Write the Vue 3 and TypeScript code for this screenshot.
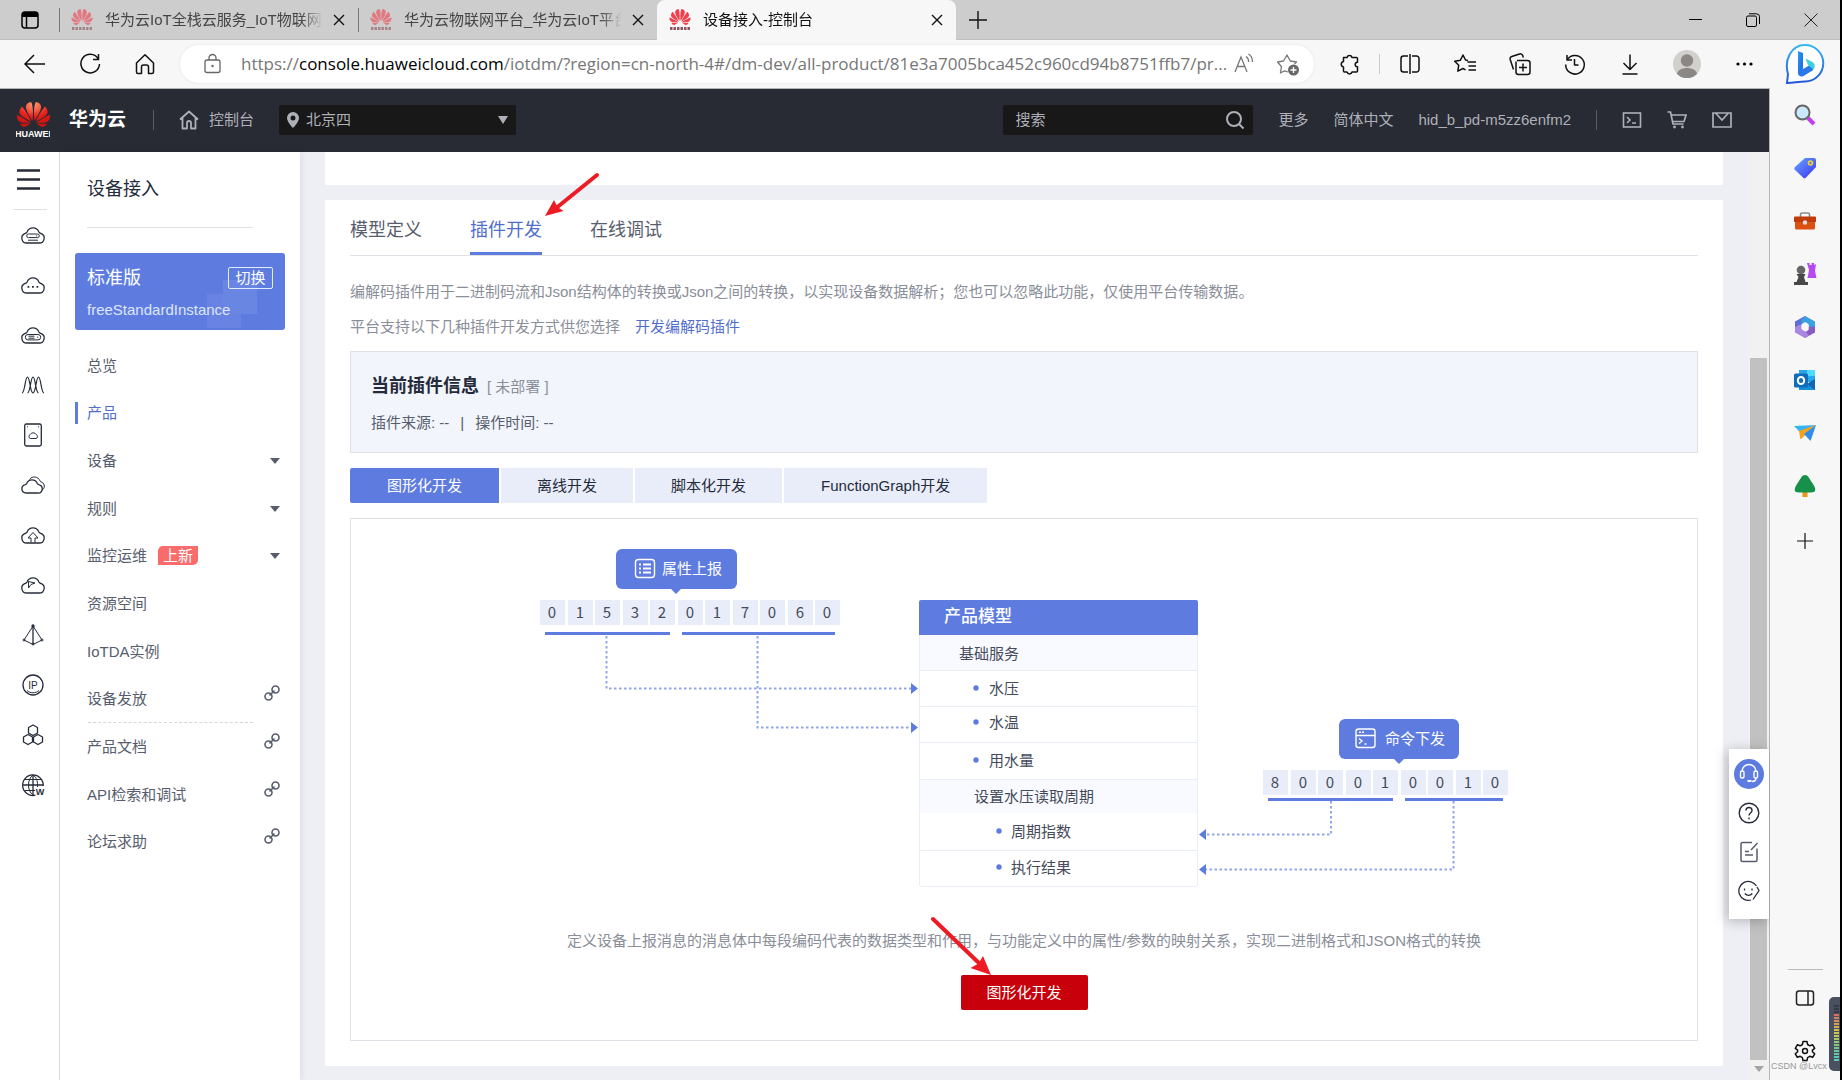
<script setup lang="ts">
import { ref } from 'vue'

interface Shape {
  d: string
  fill?: string
  stroke?: string
  width?: number
}
interface Glyph {
  name: string
  shapes: Shape[]
}
interface MenuItem {
  label: string
  kind?: 'expand' | 'link'
  badge?: string
  dashed?: boolean
}

const petals =
  'M3.67 6.14S1.82 7.91 1.72 9.78v.35c.08 1.51 1.22 2.4 1.22 2.4 1.83 1.79 6.26 4.04 7.3 4.55 0 0 .06.03.1-.01l.02-.04v-.04C7.52 10.8 3.67 6.14 3.67 6.14zM9.65 18.6c-.02-.08-.1-.08-.1-.08l-7.38.26c.8 1.43 2.15 2.53 3.56 2.2.96-.25 3.16-1.78 3.88-2.3.06-.05.04-.09.04-.09zm.08-.78C6.49 15.63.21 12.28.21 12.28c-.15.46-.2.9-.21 1.3v.07c0 1.07.4 1.82.4 1.82.8 1.69 2.34 2.2 2.34 2.2.7.3 1.4.31 1.4.31.12.02 4.4 0 5.54 0 .05 0 .08-.05.08-.05v-.06c0-.03-.03-.05-.03-.05zM9.06 3.19a3.42 3.42 0 00-2.57 3.15v.41c.03.6.16 1.05.16 1.05.66 2.9 3.86 7.65 4.55 8.65.05.05.1.03.1.03a.1.1 0 00.06-.1c1.06-10.6-1.11-13.42-1.11-13.42-.32.02-1.19.23-1.19.23zm8.299 2.27s-.49-1.8-2.44-2.28c0 0-.57-.14-1.17-.22 0 0-2.18 2.81-1.12 13.43.01.07.06.08.06.08.07.03.1-.03.1-.03.72-1.03 3.9-5.76 4.55-8.64 0 0 .36-1.4.02-2.34zm-2.92 13.07s-.07 0-.09.05c0 0-.01.07.03.1.7.51 2.85 2 3.88 2.3 0 0 .16.05.43.06h.14c.69-.02 1.9-.37 3-2.26l-7.4-.25zm7.83-8.41c.14-2.06-1.94-3.97-1.94-3.98 0 0-3.85 4.66-6.67 10.8 0 0-.03.08.02.13l.04.01h.06c1.06-.53 5.46-2.77 7.28-4.54 0 0 1.15-.93 1.21-2.42zm1.52 2.14s-6.28 3.37-9.52 5.55c0 0-.05.04-.03.11 0 0 .03.06.07.06 1.16 0 5.56 0 5.67-.02 0 0 .57-.02 1.27-.29 0 0 1.56-.5 2.37-2.27 0 0 .73-1.45.17-3.14z'

const browserTabs = [
  { title: '华为云IoT全栈云服务_IoT物联网解', active: false },
  { title: '华为云物联网平台_华为云IoT平台', active: false },
  { title: '设备接入-控制台', active: true },
]

const browserTools: Glyph[] = [
  { name: '拆分窗口', shapes: [{ d: 'M10 4H5.500a2.500 2.500 0 00-2.500 2.500v11A2.500 2.500 0 005.500 20H10M14 4h4.500A2.500 2.500 0 0121 6.500v11a2.500 2.500 0 01-2.500 2.500H14M12 2v20' }] },
  { name: '收藏夹', shapes: [{ d: 'M15 8.500L12.500 8 10 3 7.300 8.300 1.700 9.200 5.700 13.300 4.800 19.200 10 16.500 12.500 17.800M14.500 10H23M15.500 14H23M15.500 18H23' }] },
  { name: '集锦', shapes: [{ d: 'M9 8.500h10.500A2.500 2.500 0 0122 11v9a2.500 2.500 0 01-2.500 2.500h-9A2.500 2.500 0 018 20V9.500M15 11.500v8M11 15.500h8M5.500 17.500L2.200 7.500a2.500 2.500 0 011.600-3L11.500 2a2.500 2.500 0 013.200 1.600l.6 2' }] },
  { name: '历史记录', shapes: [{ d: 'M4 3v5h5M4.200 7.700A9.300 9.300 0 112.700 12.500M11.500 7v6h4' }] },
  { name: '下载', shapes: [{ d: 'M12 2.500V17M5.500 11l6.500 6.500 6.500-6.500M4.500 22h15' }] },
]

const cloud = 'M8 22h12a4.900 4.900 0 002.400-9.300c-1-.5-2-.6-2.500-1.700a6.300 6.300 0 00-11.800 0c-.5 1.100-1.500 1.200-2.500 1.700A4.900 4.900 0 008 22z'

const services: Glyph[] = [
  { name: '云服务器', shapes: [{ d: cloud }, { d: 'M9.500 13h9a1.700 1.700 0 010 3.600h-9a1.700 1.700 0 010-3.600zM17.200 14.800h1M9 19.200h10', width: 1 }] },
  { name: '裸金属', shapes: [{ d: cloud }, { d: 'M8.500 15h1.800v1.800H8.500zM13 15h1.800v1.800H13zM17.500 15h1.800v1.800h-1.800z', fill: '#252b3a', stroke: 'none' }] },
  { name: '云主机', shapes: [{ d: cloud }, { d: 'M9 13.500h10a2.700 2.700 0 010 5.400H9a2.700 2.700 0 010-5.400zM9.500 15.200h6M9.500 17.200h6M18 16.200h1.200', width: 1 }] },
  { name: '弹性伸缩', shapes: [{ d: 'M3 22c3 0 3-16 5.500-16S11 22 14 22M8.500 22C11.500 22 11.500 6 14 6s2.500 16 5.500 16M14 22c3 0 3-16 5.500-16S22 22 25 22', width: 1.2 }] },
  { name: '镜像', shapes: [{ d: 'M7.500 3h13a1.800 1.800 0 011.800 1.800v18.400a1.800 1.800 0 01-1.800 1.800h-13a1.800 1.800 0 01-1.800-1.800V4.800A1.800 1.800 0 017.500 3z' }, { d: 'M11.500 17.500h5.500a2 2 0 00.3-3.800 3.500 3.500 0 00-6.200 0 2 2 0 00.4 3.800zM8 5.800h1M19 5.800h1', width: 1 }] },
  { name: '对象存储', shapes: [{ d: 'M7 22h11.500a4.200 4.200 0 001.700-8.200c-.8-.3-1.500-.5-1.900-1.400a5.700 5.700 0 00-10.600 0c-.4.900-1.100 1.100-1.900 1.400A4.200 4.200 0 007 22z' }, { d: 'M10.500 8.500c2.500-4 9-3 10.500 1.300.4 1 1 1.200 1.900 1.500 3.200 1.500 3.200 6 .1 7.900', width: 1 }] },
  { name: '云上传', shapes: [{ d: cloud }, { d: 'M12 21.500V17H9l5-5.500 5 5.500h-3v4.500', width: 1 }] },
  { name: '云加速', shapes: [{ d: cloud }, { d: 'M9.500 10.500v6.500l2.500-3.500 4-1.500-6.500-1.500', width: 1 }] },
  { name: '虚拟私有云', shapes: [{ d: 'M14 5L5 19l9 4.500L23 19 14 5z', width: 1 }, { d: 'M14 4v19' }, { d: 'M14 4a1 1 0 110 2 1 1 0 010-2z', fill: '#252b3a' }, { d: 'M14 22a1 1 0 110 2 1 1 0 010-2zM5 18a1 1 0 110 2 1 1 0 010-2zM23 18a1 1 0 110 2 1 1 0 010-2z', width: 1 }] },
  { name: '弹性公网', shapes: [{ d: 'M14 4a10 10 0 110 20 10 10 0 010-20z' }, { d: 'M8 19.500c3 3 9 3 12 0', width: 1 }] },
  { name: '关系型数据库', shapes: [{ d: 'M14 4l4.500 2.500V12L14 14.500 9.500 12V6.500L14 4zM9 13.500l4.500 2.500v5L9 23.500 4.500 21v-5L9 13.500zM19 13.500l4.500 2.500v5L19 23.500 14.500 21v-5l4.500-2.500z' }] },
  { name: '域名', shapes: [{ d: 'M16.500 24.200A10.300 10.300 0 1124.200 15M14 4v20M4 14h20' }, { d: 'M14 4c-6 4-6 16 0 20M14 4c4 2.500 5 8 4.500 12M6 8.500h16M6 19.500h10', width: 1 }] },
]

const menu: MenuItem[] = [
  { label: '总览' },
  { label: '产品' },
  { label: '设备', kind: 'expand' },
  { label: '规则', kind: 'expand' },
  { label: '监控运维', kind: 'expand', badge: '上新' },
  { label: '资源空间' },
  { label: 'IoTDA实例' },
  { label: '设备发放', kind: 'link', dashed: true },
  { label: '产品文档', kind: 'link' },
  { label: 'API检索和调试', kind: 'link' },
  { label: '论坛求助', kind: 'link' },
]
const currentMenu = ref('产品')

const tabs = ['模型定义', '插件开发', '在线调试']
const currentTab = ref('插件开发')

const modes = ['图形化开发', '离线开发', '脚本化开发', 'FunctionGraph开发']
const currentMode = ref('图形化开发')

const region = ref('北京四')
const keyword = ref('')

const reportDigits = '01532017060'.split('')
const commandDigits = '800010010'.split('')
const digitX = (start: number, i: number): number => start + Math.round(i * 27.5)

const modelRows = [
  { label: '基础服务', x: 419, y: 104, dot: 0 },
  { label: '水压', x: 449, y: 139, dot: 436 },
  { label: '水温', x: 449, y: 173, dot: 436 },
  { label: '用水量', x: 449, y: 211, dot: 436 },
  { label: '设置水压读取周期', x: 434, y: 247, dot: 0 },
  { label: '周期指数', x: 471, y: 282, dot: 459 },
  { label: '执行结果', x: 471, y: 318, dot: 459 },
]
const modelLines = [121, 157, 193, 230, 301]

const meter = ['#343a48', '#343a48', '#343a48', '#d9705a', '#d9805a', '#d98f55', '#d9a04f', '#d8b04a', '#d3bd49', '#cbc552', '#bcc75c', '#aac766', '#98c870', '#86c87a', '#74c888', '#68c998', '#5fcaa6', '#5bcbb0', '#59ccb6']
</script>

<template>
  <div class="window">
    <header class="tabbar">
      <button class="workspace" aria-label="标签页操作">
        <svg width="20" height="20" viewBox="0 0 20 20"><rect x="2" y="2" width="16" height="16" rx="3" fill="none" stroke="#000" stroke-width="1.500" /><path d="M2 7V5a3 3 0 013-3h10a3 3 0 013 3v2z" /><path d="M6.500 7v11" stroke="#000" stroke-width="1.500" /></svg>
      </button>
      <div v-for="t in browserTabs" :key="t.title" class="btab" :class="{ active: t.active }">
        <svg class="favicon" width="22" height="22" viewBox="0 0 22 22">
          <svg x="0" y="0" width="22" height="16" viewBox="0 2.900 24 18.200"><path :d="petals" fill="#f0404e" /></svg>
          <path d="M1 19.500h20" stroke="#8a5560" stroke-width="3" stroke-dasharray="2.500 1" />
        </svg>
        <span class="btitle">{{ t.title }}</span>
        <button class="bclose" aria-label="关闭标签页"><svg width="12" height="12" viewBox="0 0 12 12"><path d="M1 1l10 10M11 1L1 11" stroke="#111" stroke-width="1.400" /></svg></button>
      </div>
      <button class="newtab" aria-label="新建标签页"><svg width="18" height="18" viewBox="0 0 18 18"><path d="M9 0v18M0 9h18" stroke="#111" stroke-width="1.400" /></svg></button>
      <div class="winctl">
        <button aria-label="最小化"><svg width="14" height="14" viewBox="0 0 14 14"><path d="M1 6.500h13" stroke="#000" /></svg></button>
        <button aria-label="还原"><svg width="14" height="14" viewBox="0 0 14 14"><g fill="none" stroke="#000"><rect x=".5" y="3" width="10" height="10.500" rx="1.500" /><path d="M3 .8h7.500a3 3 0 013 3V11" /></g></svg></button>
        <button aria-label="关闭"><svg width="14" height="14" viewBox="0 0 14 14"><path d="M.5 .5l13 13M13.500 .5l-13 13" stroke="#222" /></svg></button>
      </div>
    </header>

    <div class="below">
      <div class="main">
        <nav class="toolbar">
          <button class="nav" aria-label="后退"><svg width="24" height="24" viewBox="0 0 24 24"><path d="M22 12H2.500M11 3l-9 9 9 9" fill="none" stroke="#111" stroke-width="1.500" /></svg></button>
          <button class="nav" aria-label="刷新"><svg width="24" height="24" viewBox="0 0 24 24"><path d="M20 6.500A9.300 9.300 0 1021.500 12M20.500 2v5.500H15" fill="none" stroke="#111" stroke-width="1.500" /></svg></button>
          <button class="nav" aria-label="主页"><svg width="24" height="24" viewBox="0 0 24 24"><path d="M3.500 11L12 2.800l8.500 8.200v9a1.500 1.500 0 01-1.500 1.500h-3.500V15a2 2 0 00-2-2h-3a2 2 0 00-2 2v6.500H5A1.500 1.500 0 013.500 20z" fill="none" stroke="#111" stroke-width="1.500" stroke-linejoin="round" /></svg></button>
          <div class="address">
            <svg class="lock" width="20" height="22" viewBox="0 0 20 22"><g fill="none" stroke="#666" stroke-width="1.300"><rect x="3" y="7" width="15" height="12.500" rx="2" /><path d="M7 7V5a3.500 3.500 0 017 0v2" /></g><circle cx="10.500" cy="13" r="1.200" fill="#666" /></svg>
            <div class="url" role="textbox" aria-label="地址">https://<b>console.huaweicloud.com</b>/iotdm/?region=cn-north-4#/dm-dev/all-product/81e3a7005bca452c960cd94b8751ffb7/pr...</div>
            <button aria-label="大声朗读"><svg width="22" height="22" viewBox="0 0 22 22"><path d="M2 19L8 4l6 15M4.200 13.500h7.600M13 3.500c2 1.200 2.700 3 2.700 5.500M15.500 1c3 1.800 4 4.500 4 8" fill="none" stroke="#777" stroke-width="1.300" /></svg></button>
            <button class="favadd" aria-label="添加到收藏夹"><svg width="24" height="24" viewBox="0 0 24 24"><path d="M12 20l-3.500-1.200L4.500 21l.9-6.500L1.500 10l6-1L11 3l3.300 6 6.200 1-2 2" fill="none" stroke="#777" stroke-width="1.300" stroke-linejoin="round" /><circle cx="17.500" cy="18" r="5.500" fill="#666" /><path d="M17.500 15v6M14.500 18h6" stroke="#fff" stroke-width="1.300" /></svg></button>
          </div>
          <button class="tool ext" aria-label="扩展"><svg width="24" height="24" viewBox="0 0 24 24"><path d="M5.500 5.500H9a2.600 2.600 0 015 0h4.500a1 1 0 011 1v3.700a2.300 2.300 0 100 4.600V19a1 1 0 01-1 1H14a2.600 2.600 0 01-5 0H6.500a1 1 0 01-1-1v-4a2.800 2.800 0 010-5.500z" fill="none" stroke="#111" stroke-width="1.500" stroke-linejoin="round" /></svg></button>
          <i class="tsep"></i>
          <button v-for="g in browserTools" :key="g.name" class="tool" :aria-label="g.name">
            <svg width="24" height="24" viewBox="0 0 24 24"><path v-for="s in g.shapes" :key="s.d" :d="s.d" fill="none" stroke="#111" stroke-width="1.500" stroke-linejoin="round" /></svg>
          </button>
          <button class="tool avatar" aria-label="个人"><svg width="28" height="28" viewBox="0 0 28 28"><circle cx="14" cy="14" r="14" fill="#d2d0cd" /><circle cx="14" cy="10.500" r="6.200" fill="#8a8784" /><path d="M4 24c1-8 19-8 20 0a14 14 0 01-20 0z" fill="#8a8784" /></svg></button>
          <button class="tool more" aria-label="设置及其他"><svg width="20" height="6" viewBox="0 0 20 6"><circle cx="4" cy="3" r="1.600" /><circle cx="10.500" cy="3" r="1.600" /><circle cx="17" cy="3" r="1.600" /></svg></button>
        </nav>

        <div class="page">
          <header class="topbar">
            <a class="brand" href="#">
              <svg width="34" height="38" viewBox="0 0 34 38">
                <defs><radialGradient id="petalRed" cx=".5" cy=".1" r=".8"><stop offset="0" stop-color="#ff9a70" /><stop offset=".6" stop-color="#e6201c" /><stop offset="1" stop-color="#cf1410" /></radialGradient></defs>
                <svg x="1" y="1" width="33" height="25" viewBox="0 2.900 24 18.200"><path :d="petals" fill="url(#petalRed)" /></svg>
                <text x="17" y="36" text-anchor="middle" class="mark">HUAWEI</text>
              </svg>
              <span>华为云</span>
            </a>
            <i class="hsep"></i>
            <a class="console" href="#"><svg width="20" height="20" viewBox="0 0 20 20"><path d="M1 9.500L10 1.500l9 8M3.500 8v10.500H8V13a2 2 0 014 0v5.500h4.500V8" fill="none" stroke="#adb0b8" stroke-width="1.800" stroke-linejoin="round" /></svg>控制台</a>
            <div class="region">
              <svg width="14" height="16" viewBox="0 0 14 16"><path d="M7 0a6 6 0 016 6c0 4-6 10-6 10S1 10 1 6a6 6 0 016-6zm0 3.500a2.500 2.500 0 100 5 2.500 2.500 0 000-5z" fill="#adb0b8" fill-rule="evenodd" /></svg>
              <select v-model="region" aria-label="区域"><option>北京四</option><option>上海一</option></select>
              <svg width="10" height="8" viewBox="0 0 10 8"><path d="M0 0h10L5 8z" fill="#adb0b8" /></svg>
            </div>
            <span class="grow"></span>
            <div class="search">
              <input v-model="keyword" type="text" placeholder="搜索" aria-label="搜索" />
              <button aria-label="搜索"><svg width="20" height="20" viewBox="0 0 20 20"><circle cx="9" cy="9" r="7" fill="none" stroke="#adb0b8" stroke-width="2" /><path d="M14 14l4.500 4.500" stroke="#adb0b8" stroke-width="2" /></svg></button>
            </div>
            <a class="hlink" href="#">更多</a>
            <a class="hlink" href="#">简体中文</a>
            <a class="hlink" href="#">hid_b_pd-m5zz6enfm2</a>
            <i class="hsep acct"></i>
            <button class="hico" aria-label="命令行"><svg width="20" height="20" viewBox="0 0 20 20"><g fill="none" stroke="#adb0b8" stroke-width="1.600"><rect x="1.500" y="3" width="17" height="14" /><path d="M5 7l3 3-3 3M10 13h4" /></g></svg></button>
            <button class="hico" aria-label="购物车"><svg width="20" height="20" viewBox="0 0 20 20"><path d="M.5 2h3l2.500 12h10.500M4.500 5h14.500l-2 6.500H5.500" fill="none" stroke="#adb0b8" stroke-width="1.700" /><circle cx="7.500" cy="17" r="1.400" fill="#adb0b8" /><circle cx="15.500" cy="17" r="1.400" fill="#adb0b8" /></svg></button>
            <button class="hico" aria-label="消息"><svg width="20" height="20" viewBox="0 0 20 20"><path d="M1 3h18v14H1zM3.500 3l6.500 7 6.500-7" fill="none" stroke="#adb0b8" stroke-width="1.700" /></svg></button>
          </header>

          <div class="body">
            <nav class="rail">
              <button class="burger" aria-label="服务列表"><svg width="24" height="22" viewBox="0 0 24 22"><path d="M0 1.500h23M0 10.500h23M0 19.500h23" stroke="#252b3a" stroke-width="2.400" /></svg></button>
              <i class="rline"></i>
              <button v-for="s in services" :key="s.name" class="service" :aria-label="s.name">
                <svg width="28" height="28" viewBox="0 0 28 28">
                  <path v-for="p in s.shapes" :key="p.d" :d="p.d" :fill="p.fill || 'none'" :stroke="p.stroke || '#252b3a'" :stroke-width="p.width || 1.300" stroke-linejoin="round" />
                  <text v-if="s.name === '弹性公网'" x="14" y="18" text-anchor="middle" class="tiny">IP</text>
                  <text v-if="s.name === '域名'" x="21" y="24" text-anchor="middle" class="tinyb">W</text>
                </svg>
              </button>
            </nav>

            <aside class="side">
              <h2>设备接入</h2>
              <section class="instance">
                <div class="irow"><strong>标准版</strong><button>切换</button></div>
                <p>freeStandardInstance</p>
              </section>
              <ul class="menu">
                <li v-for="m in menu" :key="m.label" :class="{ current: m.label === currentMenu, dashed: m.dashed }">
                  <a href="#" @click.prevent="currentMenu = m.label">{{ m.label }}<em v-if="m.badge">{{ m.badge }}</em></a>
                  <svg v-if="m.kind === 'expand'" width="10" height="6" viewBox="0 0 10 6"><path d="M0 0h10L5 6z" fill="#575d6c" /></svg>
                  <svg v-if="m.kind === 'link'" class="chain" width="16" height="16" viewBox="0 0 16 16"><g fill="none" stroke="#575d6c" stroke-width="1.600"><circle cx="4.500" cy="11.500" r="3.500" /><circle cx="11.500" cy="4.500" r="3.500" /><path d="M5.500 10.500l5-5" /></g></svg>
                </li>
              </ul>
            </aside>

            <main class="content">
              <section class="panel previous"></section>
              <section class="panel product">
                <nav class="tabs">
                  <button v-for="t in tabs" :key="t" :class="{ on: t === currentTab }" @click="currentTab = t">{{ t }}</button>
                </nav>
                <div class="intro">
                  <p>编解码插件用于二进制码流和Json结构体的转换或Json之间的转换，以实现设备数据解析；您也可以忽略此功能，仅使用平台传输数据。</p>
                  <p>平台支持以下几种插件开发方式供您选择<a href="#">开发编解码插件</a></p>
                </div>
                <section class="info">
                  <h3>当前插件信息<small>[ 未部署 ]</small></h3>
                  <p>插件来源: --<i>|</i>操作时间: --</p>
                </section>
                <div class="modes">
                  <button v-for="m in modes" :key="m" :class="{ on: m === currentMode }" @click="currentMode = m">{{ m }}</button>
                </div>
                <section class="graph">
                  <svg class="diagram" width="968" height="338" viewBox="0 0 968 338">
                    <rect x="76" y="0" width="121" height="40" rx="6" fill="#5e7ce0" /><path d="M131 40h10l-5 5z" fill="#5e7ce0" />
                    <g fill="none" stroke="#fff" stroke-width="1.400"><rect x="95.500" y="10.500" width="19" height="18" rx="3" /><path d="M99 15.500h2M99 19.500h2M99 23.500h2M103 15.500h8M103 19.500h8M103 23.500h8" stroke-width="1.800" /></g>
                    <text x="122" y="25" class="t15 light">属性上报</text>
                    <g v-for="(n, i) in reportDigits" :key="'r' + i"><rect :x="digitX(0, i)" y="51" width="25" height="25" fill="#e9edfa" /><text :x="digitX(12, i)" y="69" text-anchor="middle" class="t15">{{ n }}</text></g>
                    <path d="M5 84.500h125M142 84.500h153" stroke="#5e7ce0" stroke-width="3" />

                    <rect x="379.500" y="51.500" width="278" height="286" rx="2" fill="#fff" stroke="#e9edfa" />
                    <path d="M379 86V53a2 2 0 012-2h275a2 2 0 012 2v33z" fill="#5e7ce0" />
                    <path d="M380 86h277v35H380zM380 230h277v34H380z" fill="#f8faff" />
                    <path v-for="y in modelLines" :key="y" :d="`M380 ${y}.5h277`" stroke="#e9edfa" />
                    <text x="404" y="73" class="t17 light">产品模型</text>
                    <g v-for="r in modelRows" :key="r.label"><circle v-if="r.dot" :cx="r.dot" :cy="r.y" r="2.700" fill="#5e7ce0" /><text :x="r.x" :y="r.y + 6" class="t15">{{ r.label }}</text></g>

                    <g fill="none" stroke="#8fa5ec" stroke-width="2" stroke-dasharray="2.500 2.500">
                      <path d="M66.500 87v52.500H371" /><path d="M217.500 87v91.500H371" />
                      <path d="M791 252v33.500H666" /><path d="M913.500 252v68.500H666" />
                    </g>
                    <path d="M371 134l7 5.500-7 5.500zM371 173l7 5.500-7 5.500zM666 280l-7 5.500 7 5.500zM666 315l-7 5.500 7 5.500z" fill="#5e7ce0" />

                    <rect x="799" y="170" width="120" height="40" rx="6" fill="#5e7ce0" /><path d="M854 210h10l-5 5z" fill="#5e7ce0" />
                    <g fill="none" stroke="#fff" stroke-width="1.400"><rect x="816" y="180" width="19" height="18.500" rx="2.500" /><path d="M816 186.500h19M819 183.300h2M822 183.300h2M819 189.500l3 2.500-3 2.500M824.500 195h2" /></g>
                    <text x="845" y="195" class="t15 light">命令下发</text>
                    <g v-for="(n, i) in commandDigits" :key="'c' + i"><rect :x="digitX(723, i)" y="221" width="25" height="25" fill="#e9edfa" /><text :x="digitX(735, i)" y="239" text-anchor="middle" class="t15">{{ n }}</text></g>
                    <path d="M728 250.500h125M865 250.500h98" stroke="#5e7ce0" stroke-width="3" />
                  </svg>
                  <p>定义设备上报消息的消息体中每段编码代表的数据类型和作用，与功能定义中的属性/参数的映射关系，实现二进制格式和JSON格式的转换</p>
                  <button class="primary">图形化开发</button>
                  <svg class="arrow toButton" width="66" height="64" viewBox="0 0 66 64"><path d="M4 4l48 46" stroke="#ed1c24" stroke-width="4" stroke-linecap="round" /><path d="M62 60l-8-19-4.500 7.500-8 4.500z" fill="#ed1c24" /></svg>
                </section>
                <svg class="arrow toTab" width="58" height="48" viewBox="0 0 58 48"><path d="M54 4L12 38" stroke="#ed1c24" stroke-width="4" stroke-linecap="round" /><path d="M2 45l9-16 3.500 7 6 4z" fill="#ed1c24" /></svg>
              </section>
            </main>
            <div class="scroll"><i class="thumb"></i><svg width="10" height="6" viewBox="0 0 10 6"><path d="M0 0h10L5 6z" fill="#a3a3a3" /></svg></div>
          </div>

          <div class="float">
            <button aria-label="客服"><svg width="30" height="30" viewBox="0 0 30 30"><circle cx="15" cy="15" r="15" fill="#5e7ce0" /><g fill="none" stroke="#fff" stroke-width="1.400"><path d="M8 12.500a7 7 0 0114 0M22 19c0 2.500-2 3.500-4 3.500" /><rect x="6.500" y="12" width="3.500" height="7" rx="1.500" /><rect x="20" y="12" width="3.500" height="7" rx="1.500" /><path d="M13.500 22h4" stroke-width="2" /></g></svg></button>
            <button aria-label="帮助"><svg width="22" height="22" viewBox="0 0 22 22"><g fill="none" stroke="#252b3a" stroke-width="1.400"><circle cx="11" cy="11" r="9.800" /><path d="M8 8.500c0-4 6-4 6 0 0 2.500-3 2.500-3 5M11 15.500v1.800" /></g></svg></button>
            <button aria-label="建议"><svg width="22" height="22" viewBox="0 0 22 22"><path d="M14 1.500H4.500A1.500 1.500 0 003 3v16a1.500 1.500 0 001.500 1.500h13A1.500 1.500 0 0019 19V7.500M19.500 2L13 9M7 10.500h4M7 14h8" fill="none" stroke="#575d6c" stroke-width="1.500" /></svg></button>
            <button aria-label="满意度"><svg width="22" height="22" viewBox="0 0 22 22"><path d="M18.500 6A9.500 9.500 0 1013 20M19 7l2 3.500-6 9M6.800 13.500c2 2.500 5.500 2.500 7.500 0M6.500 8.500v2M14 8.500v2" fill="none" stroke="#252b3a" stroke-width="1.300" /></svg></button>
          </div>
        </div>
      </div>

      <aside class="edge">
        <button class="bing" aria-label="必应"><svg width="40" height="42" viewBox="0 0 40 42"><defs><linearGradient id="bingRing" x1="0" y1="0" x2="0" y2="1"><stop offset="0" stop-color="#35b5f2" /><stop offset="1" stop-color="#2456d8" /></linearGradient><linearGradient id="bingB" x1="0" y1="0" x2="1" y2="1"><stop offset="0" stop-color="#2a9df0" /><stop offset="1" stop-color="#1e5fe0" /></linearGradient></defs><path d="M20 2a18 18 0 110 36.500c-6 0-10 1-18 1.500l1-9C-1 17 6 2 20 2z" fill="#fff" stroke="url(#bingRing)" stroke-width="2" /><path d="M13 8l5 2v15l-1.500 5.500L13 28z" fill="url(#bingB)" /><path d="M13 27.500l5-1.500 7-4 3.500 3.500-1 2L18.500 33c-2.500 1.500-5.500 0-5.500-3z" fill="#2a78ea" /><path d="M20.500 15.500l7 3.500c3 2 2.500 5 1 7.500L23 22z" fill="#3cd0e0" /></svg></button>
        <button aria-label="搜索"><svg width="24" height="24" viewBox="0 0 24 24"><path d="M15 15l6 6" stroke="#c23cf0" stroke-width="4" /><circle cx="9.500" cy="9.500" r="7" fill="#c9e8fb" stroke="#666" stroke-width="2" /></svg></button>
        <button aria-label="购物"><svg width="24" height="24" viewBox="0 0 24 24"><defs><linearGradient id="tag" x1="0" y1="0" x2="1" y2="1"><stop offset="0" stop-color="#65a8ff" /><stop offset="1" stop-color="#3c30f0" /></linearGradient></defs><path d="M12 2h9a2 2 0 012 2v7L13 21.500a2 2 0 01-3 0L2 14a2 2 0 010-3z" fill="url(#tag)" /><circle cx="17.500" cy="7" r="2" fill="#6a80e8" stroke="#f2d12c" stroke-width="1.600" /></svg></button>
        <button aria-label="工具"><svg width="24" height="24" viewBox="0 0 24 24"><path d="M7.500 8V5.500a1.500 1.500 0 011.500-1.500h6a1.500 1.500 0 011.500 1.500V8" fill="none" stroke="#8a8a8a" stroke-width="1.600" /><path d="M2 12h20v7a1.500 1.500 0 01-1.500 1.500h-17A1.500 1.500 0 012 19z" fill="#dc5012" /><path d="M2 7.500h20a1 1 0 011 1V13H1V8.500a1 1 0 011-1z" fill="#c03a0a" /><circle cx="12" cy="13.500" r="2.200" fill="#ddd" /></svg></button>
        <button aria-label="游戏"><svg width="24" height="24" viewBox="0 0 24 24"><path d="M14 1h2.500v2h2V1H21v2l2-1-1 7 1.500 7h-9L16 8z" fill="#b84af2" /><circle cx="8" cy="8" r="4.300" fill="#666" /><path d="M3.500 12h9L11 15l1.500 5H15v3H1v-3h2.500L5.500 15z" fill="#484848" /></svg></button>
        <button aria-label="Microsoft 365"><svg width="24" height="24" viewBox="0 0 24 24"><path d="M12 1L2 6.500v11l6.500-4V9L16 4z" fill="#5a6fd8" /><path d="M12 1l10 5.500v10L15.500 13V9L12 7 8.500 9V5z" fill="#3aa0e0" /><path d="M22 11.500v6L12 23l-4-3 7.500-5v-3z" fill="#8a5bc0" /><path d="M2 17.500L12 23l4-2.500-4-4.500-3.500-2V9L2 12z" fill="#a888e2" /><circle cx="12" cy="12" r="3.700" fill="#f7f7f7" /></svg></button>
        <button aria-label="Outlook"><svg width="24" height="24" viewBox="0 0 24 24"><path d="M6 2h16v12H6z" fill="#28a8ea" /><path d="M14 2h8v6h-8z" fill="#50d9ff" /><path d="M6 11l8 5 8-5v11H6z" fill="#1490df" /><path d="M22 11v11L14 16z" fill="#1066b5" /><rect x="1" y="5.500" width="14" height="14" rx="1.500" fill="#0f6cbd" /><ellipse cx="8" cy="12.500" rx="3.200" ry="3.600" fill="none" stroke="#fff" stroke-width="2" /></svg></button>
        <button aria-label="发送"><svg width="24" height="24" viewBox="0 0 24 24"><path d="M1 5L23 4 8 12z" fill="#35b3f5" /><path d="M23 4L6 10l1.500 8.500z" fill="#f5a31c" /><path d="M23 4L11 13l6.500 7z" fill="#2f8df0" /></svg></button>
        <button aria-label="树"><svg width="24" height="24" viewBox="0 0 24 24"><rect x="9.500" y="17" width="5" height="6" fill="#e8961e" /><path d="M12 1c3 0 4 3 7 7.500 5 7 4 10-1 10H6c-5 0-6-3-1-10C8 4 9 1 12 1z" fill="#17914a" /></svg></button>
        <button class="add" aria-label="添加"><svg width="16" height="16" viewBox="0 0 16 16"><path d="M8 0v16M0 8h16" stroke="#111" stroke-width="1.200" /></svg></button>
        <span class="grow"></span>
        <i class="eline"></i>
        <button class="pane" aria-label="隐藏侧栏"><svg width="20" height="18" viewBox="0 0 20 18"><g fill="none" stroke="#222" stroke-width="1.500"><rect x="1.500" y="2" width="17" height="14" rx="2.500" /><path d="M13 2v14" /></g></svg></button>
        <button class="gear" aria-label="设置"><svg width="22" height="22" viewBox="0 0 22 22"><path d="M9 1.500h4l.6 3 2.200 1.300 2.900-1 2 3.500L18.400 10.200v1.600l2.300 2-2 3.500-2.900-1-2.200 1.300-.6 3H9l-.6-3-2.200-1.300-2.900 1-2-3.500 2.300-2v-1.600l-2.300-1.900 2-3.500 2.900 1 2.200-1.300z" fill="none" stroke="#111" stroke-width="1.500" stroke-linejoin="round" /><circle cx="11" cy="11" r="2.500" fill="none" stroke="#111" stroke-width="1.500" /></svg></button>
        <span class="watermark">CSDN @Lvcx</span>
        <div class="meter"><i v-for="(c, i) in meter" :key="i" :style="{ background: c }"></i></div>
      </aside>
    </div>
  </div>
</template>

<style>
body {
  background: #fff;
}
</style>

<style scoped>
* {
  box-sizing: border-box;
  margin: 0;
  padding: 0;
}
.window {
  display: flex;
  flex-direction: column;
  height: 100vh;
  overflow: hidden;
  border-right: 2px solid #000;
  font: 15px/20px 'Liberation Sans', 'Noto Sans CJK SC', sans-serif;
  color: #252b3a;
}
button {
  border: 0;
  background: none;
  font: inherit;
  color: inherit;
  cursor: pointer;
}
svg {
  display: block;
  flex: none;
}
a {
  color: inherit;
  text-decoration: none;
}
i,
em {
  font-style: normal;
}
.grow {
  flex: 1;
}

/* browser tab strip */
.tabbar {
  display: flex;
  flex: none;
  height: 40px;
  background: #cdcdcd;
  border-bottom: 1px solid #c0c0c0;
}
.workspace {
  width: 59px;
  padding-left: 20px;
}
.btab {
  display: flex;
  align-items: center;
  width: 299px;
  height: 40px;
  padding: 0 13px 0 12px;
  position: relative;
  color: #444;
}
.btab:not(.active)::before {
  content: '';
  align-self: center;
  width: 1px;
  height: 24px;
  margin: 0 0 0 -12px;
  background: #777;
}
.btab:not(.active) .favicon {
  opacity: 0.6;
  margin-left: 11px;
}
.btab.active {
  background: #f7f7f7;
  border-radius: 8px 8px 0 0;
  color: #111;
}
.btitle {
  flex: 1;
  min-width: 0;
  margin-left: 12px;
  overflow: hidden;
  white-space: nowrap;
  mask-image: linear-gradient(90deg, #000 90%, transparent);
}
.bclose {
  margin-left: 10px;
}
.newtab {
  margin-left: 13px;
}
.winctl {
  display: flex;
  margin-left: auto;
}
.winctl button {
  display: grid;
  place-items: center;
  width: 58px;
}

/* browser chrome */
.below {
  display: flex;
  flex: 1;
  min-height: 0;
}
.main {
  display: flex;
  flex: 1;
  flex-direction: column;
  min-width: 0;
}
.toolbar {
  display: flex;
  flex: none;
  align-items: center;
  height: 49px;
  padding-left: 7px;
  background: #f7f7f7;
  border-bottom: 1px solid #b5b5b5;
}
.nav {
  display: grid;
  place-items: center;
  width: 55px;
}
.address {
  display: flex;
  flex: 1;
  align-items: center;
  height: 38px;
  min-width: 0;
  margin-left: 8px;
  padding: 0 14px 0 22px;
  border-radius: 19px;
  background: #fff;
  box-shadow: 0 0 3px #e4e4e4;
}
.url {
  flex: 1;
  margin-left: 19px;
  overflow: hidden;
  white-space: nowrap;
  font: 17px/24px 'Open Sans', 'Noto Sans', sans-serif;
  color: #767676;
}
.url b {
  font-weight: 400;
  color: #000;
}
.favadd {
  margin-left: 21px;
}
.tool {
  display: grid;
  place-items: center;
  width: 55px;
}
.ext {
  margin-left: 8px;
}
.tsep {
  width: 1px;
  height: 20px;
  margin: 0 2px;
  background: #ccc;
}
.avatar {
  width: 60px;
}
.more {
  width: 53px;
}

/* console header */
.page {
  display: flex;
  flex: 1;
  flex-direction: column;
  min-height: 0;
  position: relative;
  border-right: 1px solid #b5b5b5;
}
.topbar {
  display: flex;
  flex: none;
  align-items: center;
  height: 63px;
  padding: 0 37px 1px 16px;
  background: #282b33;
  color: #adb0b8;
}
.brand {
  display: flex;
  align-items: center;
  gap: 19px;
  color: #fff;
  font-size: 19px;
  font-weight: 700;
}
.mark {
  font-size: 9px;
  font-weight: 700;
  fill: #fff;
}
.hsep {
  width: 1px;
  height: 20px;
  margin: 0 25px 0 27px;
  background: #575d6c;
}
.console {
  display: flex;
  gap: 10px;
}
.region {
  display: flex;
  align-items: center;
  width: 237px;
  height: 30px;
  margin-left: 25px;
  padding: 0 8px 0 7px;
  border-radius: 2px;
  background: #181818;
}
.region select {
  flex: 1;
  appearance: none;
  border: 0;
  padding-left: 6px;
  background: none;
  font: inherit;
  color: #adb0b8;
}
.search {
  display: flex;
  align-items: center;
  width: 250px;
  height: 30px;
  padding: 0 8px 0 12px;
  border-radius: 2px;
  background: #181818;
}
.search input {
  flex: 1;
  min-width: 0;
  border: 0;
  outline: 0;
  background: none;
  font: inherit;
  color: #adb0b8;
}
.search input::placeholder {
  color: #adb0b8;
}
.hlink {
  margin-left: 25px;
}
.acct {
  margin: 0 25px;
}
.hico + .hico {
  margin-left: 25px;
}

/* console body */
.body {
  display: flex;
  flex: 1;
  min-height: 0;
  background: #eeeff5;
}
.rail {
  display: flex;
  flex: none;
  flex-direction: column;
  align-items: center;
  width: 60px;
  border-right: 1px solid #dfe1e6;
  background: #fff;
}
.burger {
  margin: 17px 2px 18px 0;
}
.rline {
  width: 34px;
  height: 1px;
  background: #dfe1e6;
}
.service {
  display: grid;
  place-items: center;
  flex: none;
  width: 54px;
  height: 50px;
  margin-left: 6px;
}
.tiny {
  font-size: 10px;
  fill: #252b3a;
}
.tinyb {
  font-size: 9px;
  font-weight: 700;
  fill: #252b3a;
}
.side {
  flex: none;
  width: 240px;
  padding: 0 15px;
  background: #fff;
  box-shadow: 2px 0 6px rgba(37, 43, 58, 0.08);
}
.side h2 {
  height: 76px;
  margin: 0 32px 25px 12px;
  padding-top: 25px;
  border-bottom: 1px solid #dfe1e6;
  font-size: 18px;
  font-weight: 400;
  line-height: 24px;
}
.instance {
  height: 77px;
  padding: 13px 12px 0;
  border-radius: 3px;
  background: linear-gradient(#6a86e3, #6a86e3) 148px 27px / 34px 34px no-repeat, linear-gradient(#6883e2, #6883e2) 132px 41px / 34px 34px no-repeat, #5e7ce0;
  color: #fff;
}
.irow {
  display: flex;
  justify-content: space-between;
  align-items: center;
}
.irow strong {
  font-size: 18px;
  font-weight: 400;
  line-height: 24px;
}
.irow button {
  width: 45px;
  height: 22px;
  border: 1px solid #e4eafa;
  border-radius: 2px;
  line-height: 20px;
}
.instance p {
  margin-top: 10px;
  color: #dfe6fa;
}
.menu {
  display: grid;
  grid-auto-rows: 1fr;
  height: 524px;
  margin-top: 12px;
  list-style: none;
}
.menu li {
  display: flex;
  align-items: center;
  justify-content: space-between;
  padding: 0 5px 0 12px;
  color: #575d6c;
  position: relative;
}
.menu a {
  display: flex;
}
.menu em {
  width: 40px;
  height: 19px;
  margin-left: 11px;
  border-radius: 5px 0;
  background: #fa6b6b;
  color: #fff;
  line-height: 19px;
  text-align: center;
}
.menu .current {
  color: #526ecc;
}
.menu .current::before {
  content: '';
  position: absolute;
  left: 0;
  width: 3px;
  height: 22px;
  background: #5e7ce0;
}
.menu .dashed::after {
  content: '';
  position: absolute;
  left: 13px;
  right: 32px;
  bottom: 0;
  border-top: 1px dashed #d5d7dc;
}
.chain {
  margin-bottom: 12px;
}

.content {
  flex: 1;
  min-width: 0;
  padding: 0 25px;
  overflow: hidden;
}
.panel {
  background: #fff;
}
.previous {
  height: 33px;
  margin-bottom: 15px;
}
.product {
  position: relative;
  padding: 0 25px 25px;
}
.tabs {
  display: flex;
  gap: 48px;
  height: 56px;
  border-bottom: 1px solid #dfe1e6;
}
.tabs button {
  height: 55px;
  border-bottom: 3px solid transparent;
  padding-top: 7px;
  font-size: 18px;
  color: #575d6c;
}
.tabs .on {
  border-color: #5e7ce0;
  color: #526ecc;
}
.intro {
  padding: 18px 0 7px;
  line-height: 35px;
  color: #8a8e99;
}
.intro a {
  margin-left: 15px;
  color: #526ecc;
}
.info {
  height: 102px;
  padding: 22px 20px 0;
  border: 1px solid #dfe1e6;
  background: #f2f5fc;
}
.info h3 {
  font-size: 18px;
  line-height: 24px;
}
.info small {
  margin-left: 8px;
  font-size: 15px;
  font-weight: 400;
  color: #8a8e99;
}
.info p {
  margin-top: 14px;
  color: #575d6c;
}
.info i {
  margin: 0 11px;
}
.modes {
  display: flex;
  gap: 2px;
  margin: 15px 0;
}
.modes button {
  height: 35px;
  padding: 0 36px;
  background: #e9edfa;
}
.modes button:first-child,
.modes button:last-child {
  padding: 0 37px;
}
.modes .on {
  border-radius: 2px 0 0 2px;
  background: #5e7ce0;
  color: #fff;
}
.graph {
  display: flex;
  flex-direction: column;
  align-items: center;
  position: relative;
  padding: 30px 0;
  border: 1px solid #dfe1e6;
}
.diagram {
  font-family: 'Noto Sans CJK SC', sans-serif;
}
.t15 {
  font-size: 15px;
  fill: #454b5a;
}
.t17 {
  font-size: 17px;
  font-weight: 500;
}
.diagram .light {
  fill: #fff;
}
.graph p {
  margin: 42px 0 22px;
  line-height: 24px;
  color: #8a8e99;
}
.primary {
  width: 127px;
  height: 35px;
  border-radius: 2px;
  background: #c7000b;
  color: #fff;
}
.arrow {
  position: absolute;
}
.toButton {
  left: calc(50% - 95px);
  bottom: 61px;
}
.toTab {
  left: 218px;
  top: -29px;
}

.scroll {
  display: flex;
  flex: none;
  flex-direction: column;
  align-items: center;
  justify-content: flex-end;
  gap: 6px;
  width: 21px;
  padding: 206px 2px 8px 2px;
  background: #f1f1f1;
}
.thumb {
  flex: 1;
  width: 17px;
  background: #c1c1c1;
}
.float {
  display: flex;
  flex-direction: column;
  align-items: center;
  position: absolute;
  right: 0;
  bottom: 161px;
  width: 40px;
  height: 170px;
  padding-top: 10px;
  gap: 17px;
  background: #fff;
  box-shadow: -2px 2px 12px rgba(0, 0, 0, 0.25);
}
.float button:first-child {
  margin-bottom: -4px;
}

/* browser side strip */
.edge {
  display: flex;
  flex: none;
  flex-direction: column;
  align-items: center;
  position: relative;
  width: 70px;
  background: #f7f7f7;
}
.edge button {
  display: grid;
  place-items: center;
  flex: none;
  height: 53px;
}
.edge .bing {
  height: 48px;
}
.edge .add {
  height: 58px;
}
.eline {
  width: 35px;
  height: 1px;
  margin-bottom: 4px;
  background: #bbb;
}
.edge .pane {
  height: 48px;
}
.edge .gear {
  height: 58px;
}
.watermark {
  position: absolute;
  left: 1px;
  bottom: 6px;
  font-size: 9px;
  line-height: 16px;
  color: #999;
  white-space: nowrap;
}
.meter {
  display: flex;
  flex-direction: column;
  gap: 1px;
  position: absolute;
  right: -2px;
  bottom: 9px;
  width: 13px;
  height: 74px;
  padding: 8px 3px 0 5px;
  border-radius: 5px 0 0 5px;
  background: #4a5060;
}
.meter i {
  height: 2px;
}
</style>
